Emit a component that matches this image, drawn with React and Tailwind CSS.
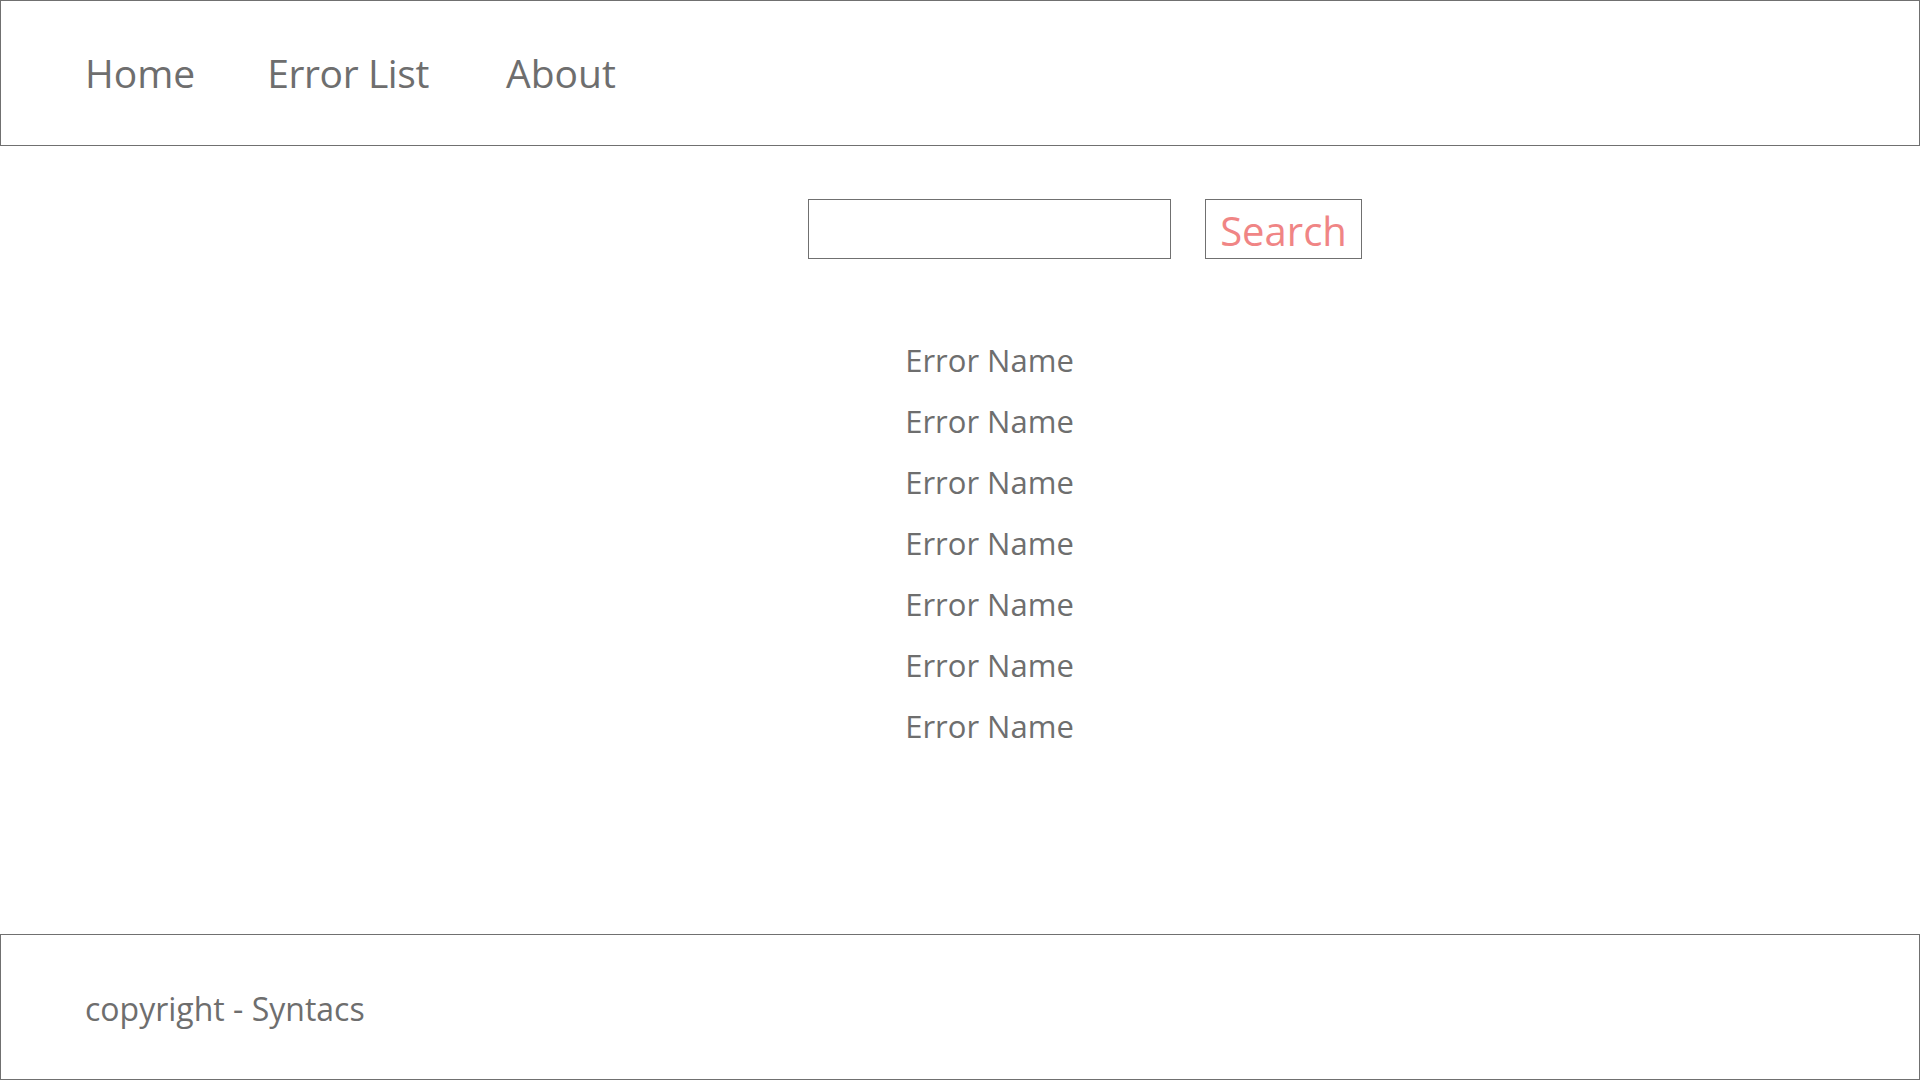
const errors = Array(7).fill("Error Name");

const App = () => {
  return (
    <div className="min-h-screen flex flex-col bg-white text-[#6e6e6e] font-['Open_Sans',sans-serif]">
      {/* Nav */}
      <header className="h-[146px] border border-[#707070] flex items-center pl-[84px] gap-[72px] text-[39px]">
        <a href="#">Home</a>
        <a href="#" className="tracking-[-0.4px]">Error List</a>
        <a href="#" className="ml-[5px]">About</a>
      </header>

      {/* Search + list */}
      <main className="flex-1 pt-[53px]">
        <div className="flex items-center pl-[808px] gap-[34px]">
          <input
            type="text"
            className="w-[363px] h-[60px] border border-[#707070] outline-none px-3 text-2xl"
          />
          <button className="h-[60px] w-[157px] border border-[#707070] text-[#f08585] text-[40px] leading-none pt-[4px]">
            Search
          </button>
        </div>

        <ul className="ml-[808px] w-[363px] mt-[71px] flex flex-col items-center text-[31px]">
          {errors.map((e, i) => (
            <li key={i} className="h-[61px] leading-[61px]">
              {e}
            </li>
          ))}
        </ul>
      </main>

      {/* Footer */}
      <footer className="h-[146px] border border-[#707070] flex items-center pl-[84px] pt-[4px] text-[32px]">
        copyright - Syntacs
      </footer>
    </div>
  );
};

export default App;
